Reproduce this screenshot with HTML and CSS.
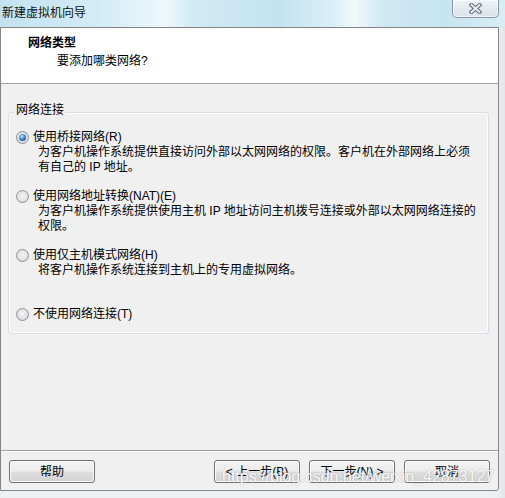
FILE: index.html
```html
<!DOCTYPE html>
<html lang="zh-CN">
<head>
<meta charset="utf-8">
<title>新建虚拟机向导</title>
<link rel="stylesheet" href="styles.css">
</head>
<body>
<div class="titlebar">
  <span class="title">新建虚拟机向导</span>
  <div class="close">
    <svg width="13" height="11" viewBox="0 0 13 11">
      <path d="M2.5 2 L10.5 9 M10.5 2 L2.5 9" stroke="#5f6b76" stroke-width="4" stroke-linecap="square" fill="none"/>
      <path d="M2.5 2 L10.5 9 M10.5 2 L2.5 9" stroke="#e9eef2" stroke-width="2" stroke-linecap="square" fill="none"/>
    </svg>
  </div>
</div>
<div class="client">
  <div class="header">
    <div class="h-title">网络类型</div>
    <div class="h-sub">要添加哪类网络?</div>
  </div>
  <div class="body">
    <div class="group">
      <span class="group-label">网络连接</span>
      <div class="option">
        <div class="opt-row"><span class="radio checked"><span class="dot"></span></span><span>使用桥接网络(R)</span></div>
        <div class="opt-desc">为客户机操作系统提供直接访问外部以太网网络的权限。客户机在外部网络上必须<br>有自己的 IP 地址。</div>
      </div>
      <div class="option">
        <div class="opt-row"><span class="radio"></span><span>使用网络地址转换(NAT)(E)</span></div>
        <div class="opt-desc">为客户机操作系统提供使用主机 IP 地址访问主机拨号连接或外部以太网网络连接的<br>权限。</div>
      </div>
      <div class="option">
        <div class="opt-row"><span class="radio"></span><span>使用仅主机模式网络(H)</span></div>
        <div class="opt-desc">将客户机操作系统连接到主机上的专用虚拟网络。</div>
      </div>
      <div class="option last">
        <div class="opt-row"><span class="radio"></span><span>不使用网络连接(T)</span></div>
      </div>
    </div>
  </div>
  <div class="footer">
    <button class="btn">帮助</button>
    <div class="spacer"></div>
    <button class="btn">&lt; 上一步(B)</button>
    <button class="btn gap">下一步(N) &gt;</button>
    <button class="btn gap">取消</button>
  </div>
</div>
<div class="watermark">https://blog.csdn.net/weixin_42873127</div>
</body>
</html>
```
FILE: styles.css
```css
* { box-sizing: border-box; }

html, body {
  margin: 0;
  padding: 0;
}

body {
  width: 505px;
  height: 498px;
  overflow: hidden;
  position: relative;
  background: linear-gradient(to right, #eef1f3 0%, #eef1f3 98%, #dfe6ea 100%);
  font-family: "Liberation Sans", "Noto Sans CJK SC", sans-serif;
  font-size: 12px;
  color: #000;
}

.titlebar {
  height: 27px;
  display: flex;
  justify-content: space-between;
  align-items: flex-start;
  background:
    linear-gradient(90deg,
      #c3e2f0 0%, #d4ecf6 20%, #eef8fc 33%, #d2eaf4 38%,
      #c4e3f1 55%, #d9eff8 66%, #f1f9fc 70%, #cfe8f3 76%,
      #c7e4f1 88%, #d8edf6 100%);
}

.title {
  padding-left: 2px;
  line-height: 26px;
  color: #111;
}

.close {
  width: 47px;
  height: 18px;
  margin-right: 6px;
  border: 1px solid #8797a5;
  border-top: none;
  border-radius: 0 0 5px 5px;
  background: linear-gradient(#eef3f7, #d9e3ea);
  box-shadow: inset 0 0 0 1px rgba(255, 255, 255, 0.6);
  display: flex;
  align-items: center;
  justify-content: center;
  padding-bottom: 1px;
}

.client {
  width: 499px;
  height: 464px;
  border: 1px solid #858585;
  border-bottom-right-radius: 3px;
  background: #f0f0f0;
}

.header {
  height: 56px;
  background: #fff;
  border-bottom: 1px solid #a0a0a0;
  padding: 8px 0 0 27px;
  line-height: 15px;
}

.h-title {
  font-weight: bold;
}

.h-sub {
  margin-top: 3px;
  margin-left: 29px;
}

.body {
  height: 367px;
  border-bottom: 1px solid #a0a0a0;
  padding: 28px 9px 0 7px;
}

.group {
  position: relative;
  height: 222px;
  border: 1px solid #d5dfe5;
  border-radius: 3px;
  box-shadow: inset 0 0 0 1px #fafcfd;
  padding: 17px 7px 0 7px;
}

.group-label {
  position: absolute;
  top: -10px;
  left: 5px;
  padding: 0 2px;
  background: #f0f0f0;
  line-height: 15px;
}

.option {
  min-height: 45px;
  margin-bottom: 14px;
}

.option.last {
  min-height: 15px;
  margin-bottom: 0;
}

.opt-row {
  display: flex;
  align-items: center;
  height: 15px;
  line-height: 15px;
  white-space: nowrap;
}

.radio {
  width: 13px;
  height: 13px;
  flex-shrink: 0;
  margin-right: 4px;
  border-radius: 50%;
  border: 1px solid #8e9194;
  background: radial-gradient(circle at 50% 45%, #f4f4f4 0%, #e6e6e6 45%, #cfcfcf 100%);
  display: flex;
  align-items: center;
  justify-content: center;
}

.dot {
  width: 7px;
  height: 7px;
  border-radius: 50%;
  background: radial-gradient(circle at 40% 35%, #c4e6ff 0%, #4a96dc 40%, #1d5596 75%, #123a6a 100%);
}

.opt-desc {
  margin-left: 22px;
  line-height: 15px;
  white-space: nowrap;
}

.footer {
  height: 39px;
  display: flex;
  align-items: flex-start;
  padding: 9px 8px 0 8px;
  box-shadow: inset 0 1px 0 #ffffff;
}

.spacer {
  flex: 1;
}

.btn {
  width: 86px;
  height: 23px;
  padding: 0;
  border: 1px solid #707070;
  border-radius: 3px;
  background: linear-gradient(#f3f3f3 0%, #ececec 48%, #dedede 52%, #d2d2d2 100%);
  box-shadow: inset 0 0 0 1px #fbfbfb;
  font-family: "Liberation Sans", "Noto Sans CJK SC", sans-serif;
  font-size: 12px;
  line-height: 20px;
  color: #000;
}

.btn.gap {
  margin-left: 9px;
}

.watermark {
  position: absolute;
  left: 222px;
  top: 469px;
  font-family: "Liberation Sans", sans-serif;
  font-size: 16px;
  line-height: 16px;
  color: rgba(255, 255, 255, 0.92);
  text-shadow:
    1px 0 0 rgba(160, 160, 160, 0.25),
    -1px 0 0 rgba(160, 160, 160, 0.25),
    0 1px 0 rgba(160, 160, 160, 0.25),
    0 -1px 0 rgba(160, 160, 160, 0.25);
  white-space: nowrap;
  pointer-events: none;
}
```
